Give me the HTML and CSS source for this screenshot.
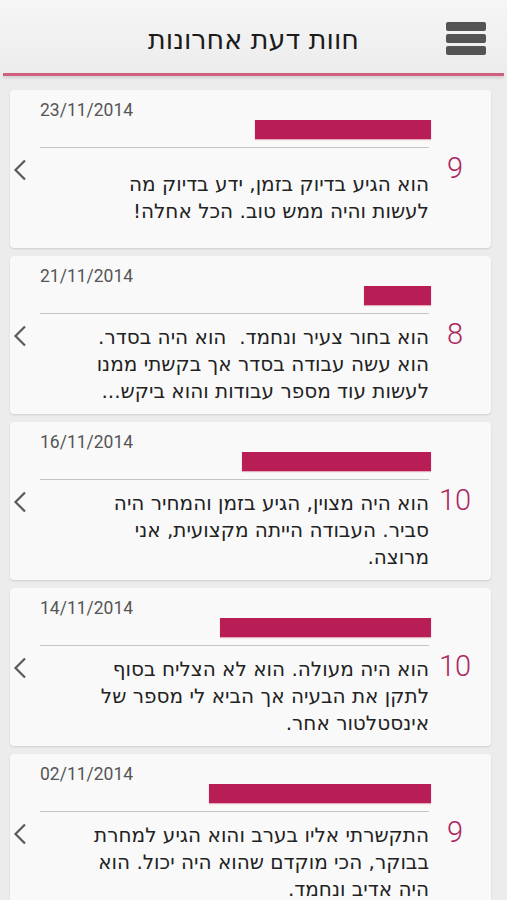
FILE: index.html
```html
<!DOCTYPE html>
<html dir="rtl" lang="he">
<head>
    <meta charset="UTF-8">
    <meta name="viewport" content="width=device-width, initial-scale=1.0">
    <title>חוות דעת אחרונות</title>
    <link rel="stylesheet" href="styles.css">
</head>
<body>
    <div class="topbar">
        <div class="menu">
            <span></span><span></span><span></span>
        </div>
        <h1 class="title">חוות דעת אחרונות</h1>
        <div></div>
    </div>
    <div class="topline"></div>

    <div class="reviews">
        <div class="card">
            <div class="score">9</div>
            <div class="main">
                <div class="date">23/11/2014</div>
                <div class="name" style="width:176px"></div>
                <hr class="sep">
                <div class="body"><p>הוא הגיע בדיוק בזמן, ידע בדיוק מה<br>לעשות והיה ממש טוב. הכל אחלה!</p></div>
            </div>
            <div class="chev"><svg width="14" height="22" viewBox="0 0 14 22"><polyline points="12,1.5 2.5,11 12,20.5" /></svg></div>
        </div>

        <div class="card">
            <div class="score">8</div>
            <div class="main">
                <div class="date">21/11/2014</div>
                <div class="name" style="width:67px"></div>
                <hr class="sep">
                <div class="body"><p>הוא בחור צעיר ונחמד.&nbsp; הוא היה בסדר.<br>הוא עשה עבודה בסדר אך בקשתי ממנו<br>לעשות עוד מספר עבודות והוא ביקש...</p></div>
            </div>
            <div class="chev"><svg width="14" height="22" viewBox="0 0 14 22"><polyline points="12,1.5 2.5,11 12,20.5" /></svg></div>
        </div>

        <div class="card">
            <div class="score">10</div>
            <div class="main">
                <div class="date">16/11/2014</div>
                <div class="name" style="width:189px"></div>
                <hr class="sep">
                <div class="body"><p>הוא היה מצוין, הגיע בזמן והמחיר היה<br>סביר. העבודה הייתה מקצועית, אני<br>מרוצה.</p></div>
            </div>
            <div class="chev"><svg width="14" height="22" viewBox="0 0 14 22"><polyline points="12,1.5 2.5,11 12,20.5" /></svg></div>
        </div>

        <div class="card">
            <div class="score">10</div>
            <div class="main">
                <div class="date">14/11/2014</div>
                <div class="name" style="width:211px"></div>
                <hr class="sep">
                <div class="body"><p>הוא היה מעולה. הוא לא הצליח בסוף<br>לתקן את הבעיה אך הביא לי מספר של<br>אינסטלטור אחר.</p></div>
            </div>
            <div class="chev"><svg width="14" height="22" viewBox="0 0 14 22"><polyline points="12,1.5 2.5,11 12,20.5" /></svg></div>
        </div>

        <div class="card">
            <div class="score">9</div>
            <div class="main">
                <div class="date">02/11/2014</div>
                <div class="name" style="width:222px"></div>
                <hr class="sep">
                <div class="body"><p>התקשרתי אליו בערב והוא הגיע למחרת<br>בבוקר, הכי מוקדם שהוא היה יכול. הוא<br>היה אדיב ונחמד.</p></div>
            </div>
            <div class="chev"><svg width="14" height="22" viewBox="0 0 14 22"><polyline points="12,1.5 2.5,11 12,20.5" /></svg></div>
        </div>
    </div>
</body>
</html>
```

FILE: styles.css
```css
body {
    margin: 0;
    background: #ececec;
    font-family: Roboto, "DejaVu Sans", sans-serif;
    color: #222;
}

/* header */
.topbar {
    height: 73px;
    display: grid;
    grid-template-columns: 1fr auto 1fr;
    align-items: center;
    background: linear-gradient(#f6f6f6, #ececec);
}
.menu {
    justify-self: start;
    margin-right: 21px;
    margin-top: 4px;
    display: flex;
    flex-direction: column;
    gap: 3px;
}
.menu span {
    display: block;
    width: 40px;
    height: 9px;
    border-radius: 2px;
    background: #545454;
}
.title {
    margin: 6px 0 0 0;
    font-family: "DejaVu Sans", sans-serif;
    font-weight: normal;
    font-size: 27px;
    color: #1c1c1c;
}
.topline {
    height: 3px;
    margin: 0 3px;
    background: #d0607e;
    box-shadow: 0 2px 3px rgba(0,0,0,0.12);
}

/* list */
.reviews {
    display: flex;
    flex-direction: column;
    gap: 8px;
    padding: 14px 16px 0 10px;
}
.card {
    height: 158px;
    display: flex;
    background: #f9f9f9;
    border-radius: 4px;
    box-shadow: 0 1px 2px rgba(0,0,0,0.13);
}
.score {
    width: 60px;
    box-sizing: border-box;
    padding: 64px 12px 0 0;
    text-align: center;
    font-size: 29px;
    font-weight: 300;
    line-height: 29px;
    color: #ad2860;
}
.main {
    flex: 1;
    display: flex;
    flex-direction: column;
}
.date {
    direction: ltr;
    text-align: left;
    margin-top: 10px;
    font-size: 17.5px;
    line-height: 20px;
    color: #555;
}
.name {
    height: 19px;
    background: #b81d56;
    box-shadow: 0 1px 1px rgba(208,96,126,0.5);
}
.sep {
    margin: 8px 2px 0 0;
    border: none;
    border-top: 1px solid #c4c4c4;
}
.body {
    flex: 1;
    display: flex;
    align-items: center;
    padding-right: 2px;
}
.body p {
    margin: 0;
    font-family: "DejaVu Sans", sans-serif;
    font-size: 20px;
    line-height: 27px;
    color: #222;
}
.chev {
    width: 30px;
    padding-top: 69px;
    box-sizing: border-box;
}
.chev svg {
    display: block;
    margin-left: 3px;
    margin-right: auto;
}
.chev polyline {
    fill: none;
    stroke: #5a5a5a;
    stroke-width: 2.2;
}
```
